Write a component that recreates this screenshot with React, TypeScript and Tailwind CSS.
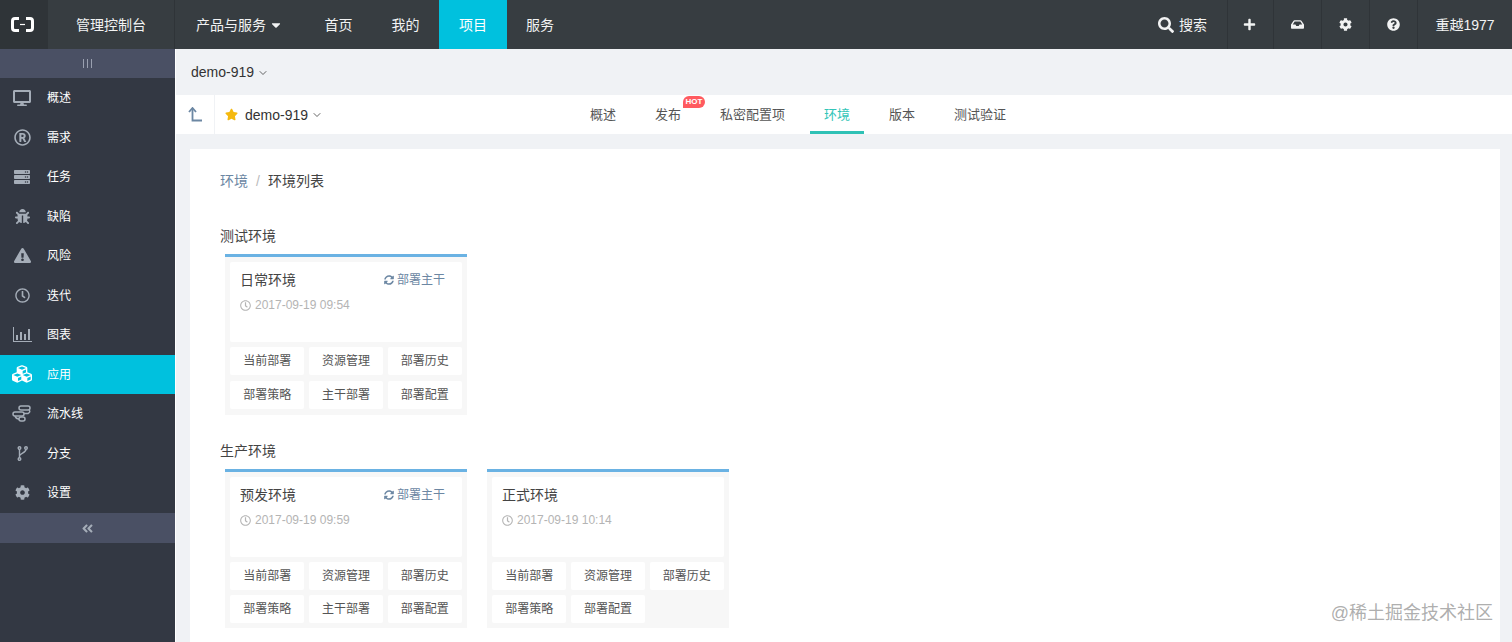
import { ChevronDown } from "lucide-react";
import {
  FaAngleDoubleLeft,
  FaBug,
  FaCaretDown,
  FaCog,
  FaCubes,
  FaDesktop,
  FaExclamationTriangle,
  FaInbox,
  FaPlus,
  FaQuestionCircle,
  FaRegClock,
  FaRegRegistered,
  FaSearch,
  FaServer,
  FaStar,
  FaSyncAlt,
} from "react-icons/fa";

function Logo() {
  return (
    <svg width="23" height="15" viewBox="0 0 23 15" fill="none" stroke="#fff" strokeWidth="3">
      <path d="M8 1.5H4Q1.5 1.5 1.5 4V11Q1.5 13.5 4 13.5H8" />
      <path d="M15 1.5H19Q21.5 1.5 21.5 4V11Q21.5 13.5 19 13.5H15" />
      <path d="M9 7.5H14" strokeWidth="1.2" />
    </svg>
  );
}

function ChartIcon() {
  return (
    <svg width="19" height="15" viewBox="0 0 19 15" fill="currentColor">
      <path d="M0 0H1V14H19V15H0Z" />
      <path d="M3 8H5V13H3ZM7 5H9V13H7ZM11 7H13V13H11ZM15 2H17V13H15Z" />
    </svg>
  );
}

function PipelineIcon() {
  return (
    <svg width="20" height="17" viewBox="0 0 20 17" fill="none" stroke="currentColor" strokeWidth="1.5">
      <rect x="7" y="1" width="11" height="4" rx="2" />
      <rect x="1" y="7" width="11" height="4" rx="2" />
      <rect x="7" y="12" width="6" height="4" rx="2" />
      <path d="M17 5Q19 7 16 8.500H12M3 11Q4 14 7 14" />
    </svg>
  );
}

function BranchIcon() {
  return (
    <svg width="11" height="15" viewBox="0 0 11 15" fill="none" stroke="currentColor" strokeWidth="1.400">
      <circle cx="2.500" cy="2" r="1.300" />
      <circle cx="2.500" cy="13" r="1.300" />
      <circle cx="9" cy="2" r="1.300" />
      <path d="M2.500 3.300V11.700M9 3.300C9 7 3 7 2.500 10" />
    </svg>
  );
}

function BackIcon() {
  return (
    <svg width="14" height="15" viewBox="0 0 14 15" fill="none" stroke="#6c87a3" strokeWidth="1.800">
      <path d="M1 5L4.500 1L8 5" />
      <path d="M4.500 1.500V13.500H14" />
    </svg>
  );
}

const sideItems = [
  { label: "概述", icon: <FaDesktop size={18} /> },
  { label: "需求", icon: <FaRegRegistered size={17} /> },
  { label: "任务", icon: <FaServer size={16} /> },
  { label: "缺陷", icon: <FaBug size={15} /> },
  { label: "风险", icon: <FaExclamationTriangle size={17} /> },
  { label: "迭代", icon: <FaRegClock size={15} /> },
  { label: "图表", icon: <ChartIcon /> },
  { label: "应用", icon: <FaCubes size={20} />, active: true },
  { label: "流水线", icon: <PipelineIcon /> },
  { label: "分支", icon: <BranchIcon /> },
  { label: "设置", icon: <FaCog size={15} /> },
];

function Sidebar() {
  return (
    <aside className="w-[175px] shrink-0 bg-[#333843] flex flex-col">
      <div className="h-[29px] bg-[#4a5064] flex items-center justify-center gap-[3px]">
        <span className="w-px h-[9px] bg-[#9aa0b0]" />
        <span className="w-px h-[9px] bg-[#9aa0b0]" />
        <span className="w-px h-[9px] bg-[#9aa0b0]" />
      </div>
      <div>
        {sideItems.map((item) => (
          <div
            key={item.label}
            className={
              item.active
                ? "h-[39.5px] flex items-center bg-[#00c1de] text-white"
                : "h-[39.5px] flex items-center text-[#a5adb8]"
            }
          >
            <span className="w-[47px] pr-[3px] flex justify-center shrink-0">{item.icon}</span>
            <span className="text-xs text-white mt-[1px]">{item.label}</span>
          </div>
        ))}
      </div>
      <div className="h-[30px] mt-[0.500px] bg-[#4a5064] flex items-center justify-center text-[#a5adb8]">
        <FaAngleDoubleLeft size={13} />
      </div>
    </aside>
  );
}

function Header() {
  return (
    <header className="h-[49px] shrink-0 bg-[#373d41] text-[#f2f3f3] text-sm flex items-center">
      <div className="w-[48px] h-full bg-[#2f3438] flex items-center justify-center pr-[4px]">
        <Logo />
      </div>
      <div className="w-[127px] h-full pl-[28px] flex items-center border-r border-[#2f3438]">管理控制台</div>
      <div className="w-[130px] h-full pl-[21px] flex items-center gap-[3px]">
        产品与服务
        <FaCaretDown size={14} />
      </div>
      <div className="w-[67px] h-full flex items-center justify-center">首页</div>
      <div className="w-[67px] h-full flex items-center justify-center">我的</div>
      <div className="w-[68px] h-full flex items-center justify-center bg-[#00c1de] text-white">项目</div>
      <div className="h-full pl-[19px] flex items-center">服务</div>
      <div className="ml-auto flex h-full">
        <div className="w-[91px] flex items-center justify-end gap-[5px] border-r border-[#2f3438] pr-[20px]">
          <FaSearch size={16} className="shrink-0" />
          <span className="shrink-0">搜索</span>
        </div>
        <div className="w-[46px] flex items-center justify-center border-r border-[#2f3438] pr-[2px]">
          <FaPlus size={13} />
        </div>
        <div className="w-[48px] flex items-center justify-center border-r border-[#2f3438]">
          <FaInbox size={13} />
        </div>
        <div className="w-[48px] flex items-center justify-center border-r border-[#2f3438]">
          <FaCog size={13} />
        </div>
        <div className="w-[48px] flex items-center justify-center border-r border-[#2f3438]">
          <FaQuestionCircle size={13} />
        </div>
        <div className="w-[94px] flex items-center justify-center">重越1977</div>
      </div>
    </header>
  );
}

const tabs = ["概述", "发布", "私密配置项", "环境", "版本", "测试验证"];

function TabBar() {
  return (
    <div className="h-[39px] shrink-0 bg-white flex items-stretch">
      <div className="w-[39px] flex items-center justify-center border-r border-[#f0f2f5]">
        <BackIcon />
      </div>
      <div className="w-[361px] flex items-center text-sm text-[#333]">
        <FaStar size={13} className="ml-[10px] mr-[7px] text-[#f5b90f]" />
        demo-919
        <ChevronDown size={12} strokeWidth={1.500} className="ml-[3px]" />
      </div>
      <div className="flex gap-[11px] text-[13px]">
        {tabs.map((tab) => (
          <div
            key={tab}
            className={
              tab === "环境"
                ? "relative px-[14px] flex items-center text-[#33c5b8] border-b-[3px] border-[#2fc1b5] pt-[3px]"
                : "relative px-[14px] flex items-center text-[#555] border-b-[3px] border-transparent pt-[3px]"
            }
          >
            {tab}
            {tab === "发布" && (
              <span className="absolute left-[42px] top-[1px] w-[22px] h-[12px] bg-[#ff5a5f] rounded-[6px] rounded-bl-none text-white text-[8px] leading-[12px] font-bold text-center">
                HOT
              </span>
            )}
          </div>
        ))}
      </div>
    </div>
  );
}

function EnvCard({
  title,
  date,
  deploy,
  compact,
  actions,
}: {
  title: string;
  date: string;
  deploy?: boolean;
  compact?: boolean;
  actions: string[];
}) {
  return (
    <div className={compact ? "w-[242px] bg-[#f7f7f7] border-t-[3px] border-[#6ab2e3] p-[5px]" : "w-[242px] bg-[#f7f7f7] border-t-[3px] border-[#6ab2e3] p-[5px] pb-[6px]"}>
      <div className="h-[80px] bg-white px-[10px] pt-[8px] rounded-[2px]">
        <div className="flex items-center justify-between pr-[7px]">
          <span className="text-sm text-[#444]">{title}</span>
          {deploy && (
            <span className="flex items-center gap-[3px] text-xs text-[#6c87a3]">
              <FaSyncAlt size={10} />
              部署主干
            </span>
          )}
        </div>
        <div className="mt-[7px] flex items-center gap-[4px] text-xs text-[#b4b4b4]">
          <FaRegClock size={11} />
          {date}
        </div>
      </div>
      <div className={compact ? "mt-[5px] grid grid-cols-3 gap-x-[4.500px] gap-y-[5px]" : "mt-[5px] grid grid-cols-3 gap-x-[4.500px] gap-y-[6px]"}>
        {actions.map((action) => (
          <div key={action} className="h-[28px] bg-white rounded-[2px] flex items-center justify-center text-xs text-[#555]">
            {action}
          </div>
        ))}
      </div>
    </div>
  );
}

const allActions = ["当前部署", "资源管理", "部署历史", "部署策略", "主干部署", "部署配置"];
const prodActions = ["当前部署", "资源管理", "部署历史", "部署策略", "部署配置"];

export default function App() {
  return (
    <div className="relative h-screen overflow-hidden flex flex-col font-['Liberation_Sans','Noto_Sans_CJK_SC',sans-serif]">
      <Header />
      <div className="flex flex-1 min-h-0">
        <Sidebar />
        <main className="flex-1 min-w-0 bg-[#f0f2f5] ml-px flex flex-col">
          <div className="h-[46px] shrink-0 pl-[15px] flex items-center text-sm text-[#333]">
            demo-919
            <ChevronDown size={12} strokeWidth={1.500} className="ml-[3px] mt-[2px]" />
          </div>
          <TabBar />
          <div className="flex-1 ml-[14px] mr-[12px] mt-[15px] bg-white pl-[30px] pt-[24px]">
            <div className="text-sm leading-[16px] flex">
              <span className="text-[#6c87a3]">环境</span>
              <span className="mx-[8px] text-[#bbb]">/</span>
              <span className="text-[#444]">环境列表</span>
            </div>
            <div className="mt-[39px] text-sm leading-[16px] text-[#444]">测试环境</div>
            <div className="mt-[10px] ml-[5px]">
              <EnvCard title="日常环境" date="2017-09-19 09:54" deploy actions={allActions} />
            </div>
            <div className="mt-[28px] text-sm leading-[16px] text-[#444]">生产环境</div>
            <div className="mt-[10px] ml-[5px] flex gap-[20px] items-start">
              <EnvCard title="预发环境" date="2017-09-19 09:59" deploy compact actions={allActions} />
              <EnvCard title="正式环境" date="2017-09-19 10:14" compact actions={prodActions} />
            </div>
          </div>
        </main>
      </div>
      <div className="absolute right-[19px] bottom-[17px] text-[18px] leading-[24px] text-[#999]/80">@稀土掘金技术社区</div>
    </div>
  );
}
